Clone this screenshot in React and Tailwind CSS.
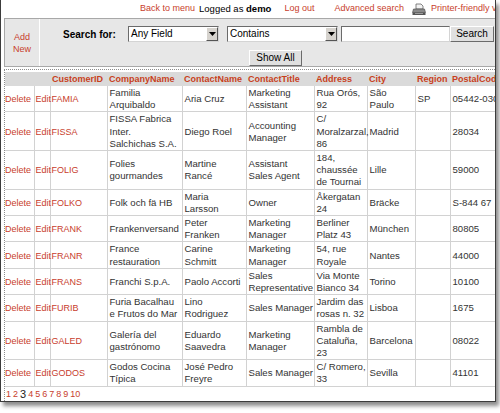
const rows = [
  ["FAMIA", "Familia\nArquibaldo", "Aria Cruz", "Marketing\nAssistant", "Rua Orós,\n92", "São\nPaulo", "SP", "05442-030"],
  ["FISSA", "FISSA Fabrica\nInter.\nSalchichas S.A.", "Diego Roel", "Accounting\nManager", "C/\nMoralzarzal,\n86", "Madrid", "", "28034"],
  ["FOLIG", "Folies\ngourmandes", "Martine\nRancé", "Assistant\nSales Agent", "184,\nchaussée\nde Tournai", "Lille", "", "59000"],
  ["FOLKO", "Folk och fä HB", "Maria\nLarsson", "Owner", "Åkergatan\n24", "Bräcke", "", "S-844 67"],
  ["FRANK", "Frankenversand", "Peter\nFranken", "Marketing\nManager", "Berliner\nPlatz 43", "München", "", "80805"],
  ["FRANR", "France\nrestauration", "Carine\nSchmitt", "Marketing\nManager", "54, rue\nRoyale", "Nantes", "", "44000"],
  ["FRANS", "Franchi S.p.A.", "Paolo Accorti", "Sales\nRepresentative", "Via Monte\nBianco 34", "Torino", "", "10100"],
  ["FURIB", "Furia Bacalhau\ne Frutos do Mar", "Lino\nRodriguez", "Sales Manager", "Jardim das\nrosas n. 32", "Lisboa", "", "1675"],
  ["GALED", "Galería del\ngastrónomo", "Eduardo\nSaavedra", "Marketing\nManager", "Rambla de\nCataluña,\n23", "Barcelona", "", "08022"],
  ["GODOS", "Godos Cocina\nTípica", "José Pedro\nFreyre", "Sales Manager", "C/ Romero,\n33", "Sevilla", "", "41101"],
];

// column widths follow the original grid
const headers = [
  ["", "w-[29px]"],
  ["", "w-[16px]"],
  ["CustomerID", "w-[57px]"],
  ["CompanyName", "w-[75px]"],
  ["ContactName", "w-[64px]"],
  ["ContactTitle", "w-[68px]"],
  ["Address", "w-[53px]"],
  ["City", "w-[48px]"],
  ["Region", "w-[35px]"],
  ["PostalCode", "w-[70px]"],
];

function FakeSelect({ label, width }) {
  return (
    <div
      className={`flex items-center h-[16px] bg-white border border-t-[#6b6b6b] border-l-[#6b6b6b] border-r-[#d4d4d4] border-b-[#d4d4d4] ${width}`}
    >
      <span className="flex-1 pl-[2px] text-[10px] leading-[14px] text-black">{label}</span>
      <span className="flex items-center justify-center w-[12px] h-[14px] bg-[#d6d3ce] border border-t-white border-l-white border-r-[#555] border-b-[#555]">
        <svg width="7" height="4" viewBox="0 0 7 4">
          <path d="M0 0h7L3.5 4z" fill="#000" />
        </svg>
      </span>
    </div>
  );
}

function PrinterIcon() {
  return (
    <svg width="14" height="13" viewBox="0 0 14 13">
      <path d="M4 1h5l2 2v3H4z" fill="#f2f2f2" stroke="#666" strokeWidth="0.8" />
      <path d="M1.5 6h11l1 3.5H0.5z" fill="#8a8a8a" stroke="#444" strokeWidth="0.6" />
      <rect x="0.5" y="9.5" width="13" height="2.5" fill="#555" />
      <path d="M3 10.5h8" stroke="#ccc" strokeWidth="0.6" />
    </svg>
  );
}

export default function App() {
  return (
    <div className="w-[500px] h-[413px] bg-white" style={{ fontFamily: "'Liberation Sans', Arial, sans-serif" }}>
      <div className="w-[496px] h-[402px] overflow-hidden bg-white border-l border-r border-b border-[#3c3c3c] shadow-[3px_4px_4px_rgba(0,0,0,0.45)]">
        <div className="w-[580px]">
          {/* top links */}
          <div className="flex items-center h-[18px] pl-[139px] text-[9px] whitespace-nowrap">
            <span className="text-[#c8402c]">Back to menu</span>
            <span className="ml-[4px] text-[9.5px] text-black">
              Logged as <b>demo</b>
            </span>
            <span className="text-[#c8402c] ml-[13px]">Log out</span>
            <span className="text-[#c8402c] ml-[20px]">Advanced search</span>
            <span className="ml-[8px]">
              <PrinterIcon />
            </span>
            <span className="text-[#c8402c] ml-[5px]">Printer-friendly version</span>
          </div>

          {/* search panel */}
          <div className="ml-[3px] flex h-[49px] bg-[#e7e7e7] border-t border-l border-b border-[#a8a8a8]">
            <div className="w-[35px] flex items-center justify-center text-center text-[9px] leading-[12px] text-[#c8402c] border-r border-white">
              Add
              <br />
              New
            </div>
            <div className="flex flex-col pt-[7px]">
              <div className="flex items-center">
                <span className="ml-[23px] w-[65px] text-[10px] font-bold text-black">Search for:</span>
                <FakeSelect label="Any Field" width="w-[91px]" />
                <div className="w-[8px]" />
                <FakeSelect label="Contains" width="w-[111px]" />
                <div className="w-[3px]" />
                <div className="w-[109px] h-[16px] bg-white border border-t-[#6b6b6b] border-l-[#6b6b6b] border-r-[#d4d4d4] border-b-[#d4d4d4]" />
                <button className="h-[16px] w-[44px] bg-[#e0e0e0] border border-t-white border-l-white border-r-[#6b6b6b] border-b-[#6b6b6b] text-[10px] leading-[12px] text-black">
                  Search
                </button>
              </div>
              <div className="mt-[2px] ml-[209px]">
                <button className="h-[16px] w-[53px] bg-[#e0e0e0] border border-t-white border-l-white border-r-[#6b6b6b] border-b-[#6b6b6b] text-[10px] leading-[12px] text-black">
                  Show All
                </button>
              </div>
            </div>
          </div>

          {/* data grid */}
          <div className="ml-[3px] mt-[2px] border border-dotted border-[#8c8c8c] pt-[2px] pb-[2px]">
            <table className="w-[515px] table-fixed border-collapse text-[9.6px] leading-[12.2px]">
              <thead>
                <tr className="bg-[#dadada]">
                  {headers.map(([h, w], i) => (
                    <th
                      key={i}
                      className={`${w} h-[14px] px-[2px] text-left text-[9px] font-bold text-[#c8401c] whitespace-nowrap overflow-hidden`}
                    >
                      {h}
                    </th>
                  ))}
                </tr>
              </thead>
              <tbody>
                {rows.map((r) => (
                  <tr key={r[0]} className="border-b border-[#d2d2d2]">
                    <td className="px-0 pt-px text-[9px] text-[#c8402c] border-r border-[#d2d2d2] align-middle">Delete</td>
                    <td className="px-[1px] pt-px text-[9px] text-[#c8402c] border-r border-[#d2d2d2] align-middle">Edit</td>
                    <td className="px-[1px] pt-px text-[9px] text-[#c8402c] border-r border-[#d2d2d2] align-middle">{r[0]}</td>
                    {r.slice(1).map((c, i) => (
                      <td
                        key={i}
                        className="px-[2px] pt-px text-[#333] whitespace-pre border-r border-[#d2d2d2] align-middle"
                      >
                        {c}
                      </td>
                    ))}
                  </tr>
                ))}
              </tbody>
            </table>
            <div className="flex items-end gap-[2px] h-[13px] pl-[1px] text-[9px] text-[#c8402c] leading-[12px]">
              {[1, 2, 3, 4, 5, 6, 7, 8, 9, 10].map((n) =>
                n === 3 ? (
                  <span key={n} className="text-[11px] text-[#222]">{n}</span>
                ) : (
                  <span key={n}>{n}</span>
                )
              )}
            </div>
          </div>
        </div>
      </div>
    </div>
  );
}
